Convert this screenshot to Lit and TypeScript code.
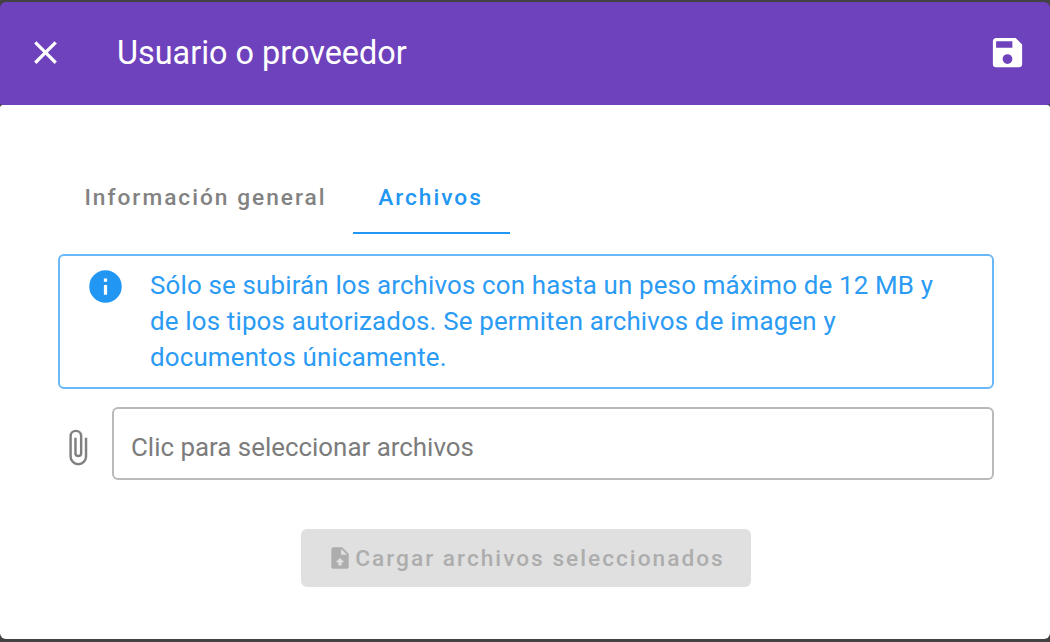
import { LitElement, html, css, svg } from "lit";
import { customElement } from "lit/decorators.js";

const icon = (d: string, cls: string) =>
  html`<svg class=${cls} viewBox="0 0 24 24" aria-hidden="true">${svg`<path fill="currentColor" fill-rule="evenodd" d=${d}></path>`}</svg>`;

const CLOSE = "M19,6.41L17.59,5L12,10.59L6.41,5L5,6.41L10.59,12L5,17.59L6.41,19L12,13.41L17.59,19L19,17.59L13.41,12L19,6.41Z";
const SAVE = "M15,9H5V5H15M12,19A3,3 0 0,1 9,16A3,3 0 0,1 12,13A3,3 0 0,1 15,16A3,3 0 0,1 12,19M17,3H5C3.89,3 3,3.9 3,5V19A2,2 0 0,0 5,21H19A2,2 0 0,0 21,19V7L17,3Z";
const INFO = "M13,9H11V7H13M13,17H11V11H13M12,2A10,10 0 0,0 2,12A10,10 0 0,0 12,22A10,10 0 0,0 22,12A10,10 0 0,0 12,2Z";
const CLIP = "M16.5,6V17.5A4,4 0 0,1 12.5,21.5A4,4 0 0,1 8.5,17.5V5A2.5,2.5 0 0,1 11,2.5A2.5,2.5 0 0,1 13.5,5V15.5A1,1 0 0,1 12.5,16.5A1,1 0 0,1 11.5,15.5V6H10V15.5A2.5,2.5 0 0,0 12.5,18A2.5,2.5 0 0,0 15,15.5V5A4,4 0 0,0 11,1A4,4 0 0,0 7,5V17.5A5.5,5.5 0 0,0 12.5,23A5.5,5.5 0 0,0 18,17.5V6H16.5Z";
const UPLOAD = "M14,2H6C4.89,2 4,2.89 4,4V20C4,21.11 4.89,22 6,22H18C19.11,22 20,21.11 20,20V8L14,2ZM13,9V3.5L18.5,9H13ZM13.5,16V19H10.5V16H8L12,12L16,16H13.5Z";

@customElement("app-root")
export class AppRoot extends LitElement {
  static styles = css`
    :host {
      display: block;
      width: 1050px;
      height: 642px;
      box-sizing: border-box;
      padding: 2px 0 3px;
      background: #424242;
      font-family: Roboto, "Liberation Sans", sans-serif;
      overflow: hidden;
    }
    .card {
      height: 100%;
      display: flex;
      flex-direction: column;
    }
    .bar {
      height: 103px;
      flex: none;
      display: flex;
      align-items: center;
      padding: 0 23px 0 26px;
      background: #6f42bd;
      color: #fff;
      border-radius: 6px 6px 3px 3px;
    }
    .close { width: 39px; height: 39px; margin-top: -2px; }
    .title {
      flex: 1;
      margin-left: 52px;
      font-size: 32.4px;
      font-weight: 400;
      margin-top: -1px;
    }
    .save { width: 39px; height: 39px; margin-top: -2px; }
    .content {
      flex: 1;
      display: flex;
      flex-direction: column;
      padding: 0 56px 0 58px;
      background: #fff;
      border-radius: 3px 3px 6px 6px;
    }
    .tabs {
      display: flex;
      margin-top: 55px;
      height: 74px;
      flex: none;
    }
    .tab {
      display: flex;
      align-items: center;
      justify-content: center;
      box-sizing: border-box;
      font-size: 22.7px;
      font-weight: 500;
      letter-spacing: 2px;
      color: #828282;
    }
    .tab.general { width: 295px; }
    .tab.active {
      width: 157px;
      padding-right: 2px;
      color: #2196f3;
      box-shadow: inset 0 -2px 0 #2196f3;
    }
    .alert {
      margin-top: 20px;
      height: 135px;
      box-sizing: border-box;
      flex: none;
      display: flex;
      align-items: flex-start;
      padding: 11px 30px 0 26px;
      border: 2px solid #6ab8f7;
      border-radius: 6px;
      color: #2196f3;
    }
    .info { width: 39px; height: 39px; flex: none; }
    .alert p {
      margin: 0 0 0 25px;
      font-size: 25.9px;
      line-height: 36px;
      letter-spacing: 0.17px;
      color: #2b9bf4;
    }
    .file {
      display: flex;
      align-items: flex-start;
      margin-top: 18px;
      flex: none;
    }
    .clip { width: 39px; height: 39px; flex: none; margin-top: 21px; color: #808080; }
    .field {
      flex: 1;
      margin-left: 15px;
      height: 73px;
      box-sizing: border-box;
      display: flex;
      align-items: center;
      padding: 6px 0 0 17px;
      border: 2px solid #bababa;
      border-radius: 6px;
      font-size: 25.9px;
      color: #7c7c7c;
    }
    .actions {
      display: flex;
      justify-content: center;
      margin-top: 49px;
    }
    .btn {
      width: 450px;
      height: 58px;
      display: flex;
      align-items: center;
      justify-content: center;
      gap: 2px;
      border-radius: 6px;
      background: #e0e0e0;
      color: #adadad;
      font-size: 22.7px;
      font-weight: 500;
      letter-spacing: 2px;
    }
    .upload { width: 26px; height: 26px; }
  `;

  render() {
    return html`
      <div class="card">
        <header class="bar">
          ${icon(CLOSE, "close")}
          <div class="title">Usuario o proveedor</div>
          ${icon(SAVE, "save")}
        </header>
        <main class="content">
          <nav class="tabs">
            <div class="tab general">Información general</div>
            <div class="tab active">Archivos</div>
          </nav>
          <section class="alert">
            ${icon(INFO, "info")}
            <p>Sólo se subirán los archivos con hasta un peso máximo de 12 MB y de los tipos autorizados. Se permiten archivos de imagen y documentos únicamente.</p>
          </section>
          <div class="file">
            ${icon(CLIP, "clip")}
            <div class="field">Clic para seleccionar archivos</div>
          </div>
          <div class="actions">
            <div class="btn">${icon(UPLOAD, "upload")}<span>Cargar archivos seleccionados</span></div>
          </div>
        </main>
      </div>
    `;
  }
}
